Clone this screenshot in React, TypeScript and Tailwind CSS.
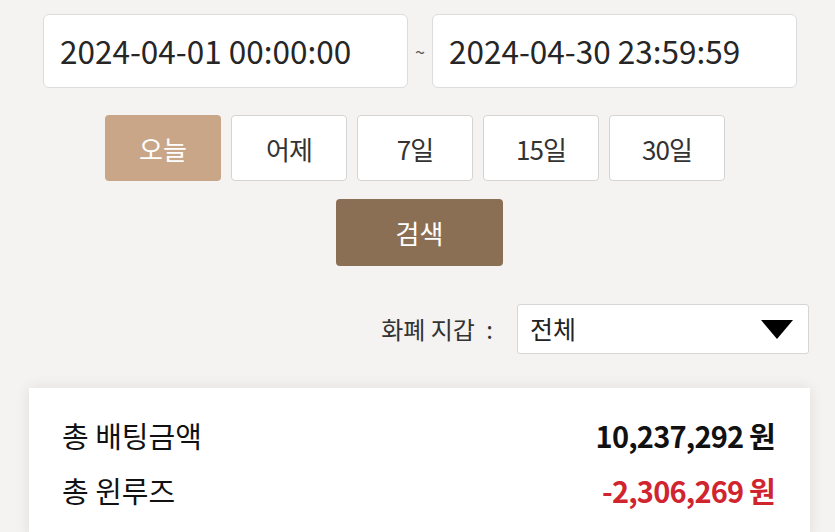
import React from 'react';

const font = { fontFamily: '"Noto Sans CJK KR", "Noto Sans", sans-serif' };

const ranges = ['오늘', '어제', '7일', '15일', '30일'];

/**
 * Date range filter with quick buttons, wallet select and a totals card
 */
export default function App() {
  return (
    <div className="w-[835px] h-[532px] overflow-hidden bg-[#f4f3f1] text-[#222]" style={font}>
      {/* Date range inputs */}
      <div className="flex items-center pt-[14px] pl-[43px]">
        <div className="w-[365px] h-[74px] bg-white border border-[#dcdcdc] rounded-[6px] flex items-center pl-[16px] text-[31.5px] text-[#262626]">
          2024-04-01 00:00:00
        </div>
        <div className="w-[24px] text-center text-[18px] text-[#555]">~</div>
        <div className="w-[365px] h-[74px] bg-white border border-[#dcdcdc] rounded-[6px] flex items-center pl-[16px] text-[31.5px] text-[#262626]">
          2024-04-30 23:59:59
        </div>
      </div>

      {/* Quick range buttons */}
      <div className="flex gap-[10px] mt-[27px] ml-[105px]">
        {ranges.map((r, i) => (
          <button
            key={r}
            className={
              i === 0
                ? 'w-[116px] h-[66px] rounded-[4px] bg-[#c9a688] text-white text-[26px] flex items-center justify-center'
                : 'w-[116px] h-[66px] rounded-[4px] bg-white border border-[#d4d4d4] text-[#333] text-[26px] flex items-center justify-center tracking-[-1px]'
            }
          >
            {r}
          </button>
        ))}
      </div>

      {/* Search */}
      <div className="mt-[18px] ml-[336px]">
        <button className="w-[167px] h-[67px] rounded-[4px] bg-[#8b6f54] text-white text-[26px] flex items-center justify-center">
          검색
        </button>
      </div>

      {/* Wallet select */}
      <div className="flex items-center justify-end mt-[38px] pr-[26px]">
        <span className="text-[24px] text-[#333] mr-[24px]">
          화폐 지갑 <span className="ml-[6px]">:</span>
        </span>
        <div className="w-[292px] h-[50px] bg-white border border-[#d6d6d6] rounded-[3px] flex items-center justify-between pl-[12px] pr-[15px]">
          <span className="text-[25px] text-[#222]">전체</span>
          <svg width="32" height="19" viewBox="0 0 32 19">
            <path d="M0 0h32L16 19z" fill="#000" />
          </svg>
        </div>
      </div>

      {/* Totals card */}
      <div className="mt-[34px] ml-[29px] w-[781px] bg-white shadow-[0_0_14px_rgba(0,0,0,0.09)] pt-[20px] pl-[33px] pr-[35px] pb-[20px]">
        <div className="flex items-center justify-between h-[55px] text-[29px]">
          <span className="text-[#111]">총 배팅금액</span>
          <span className="font-bold text-[#111] tracking-[-0.8px]">10,237,292 원</span>
        </div>
        <div className="flex items-center justify-between h-[55px] text-[29px]">
          <span className="text-[#111]">총 윈루즈</span>
          <span className="font-bold text-[#d0242f] tracking-[-0.8px]">-2,306,269 원</span>
        </div>
      </div>
    </div>
  );
}
